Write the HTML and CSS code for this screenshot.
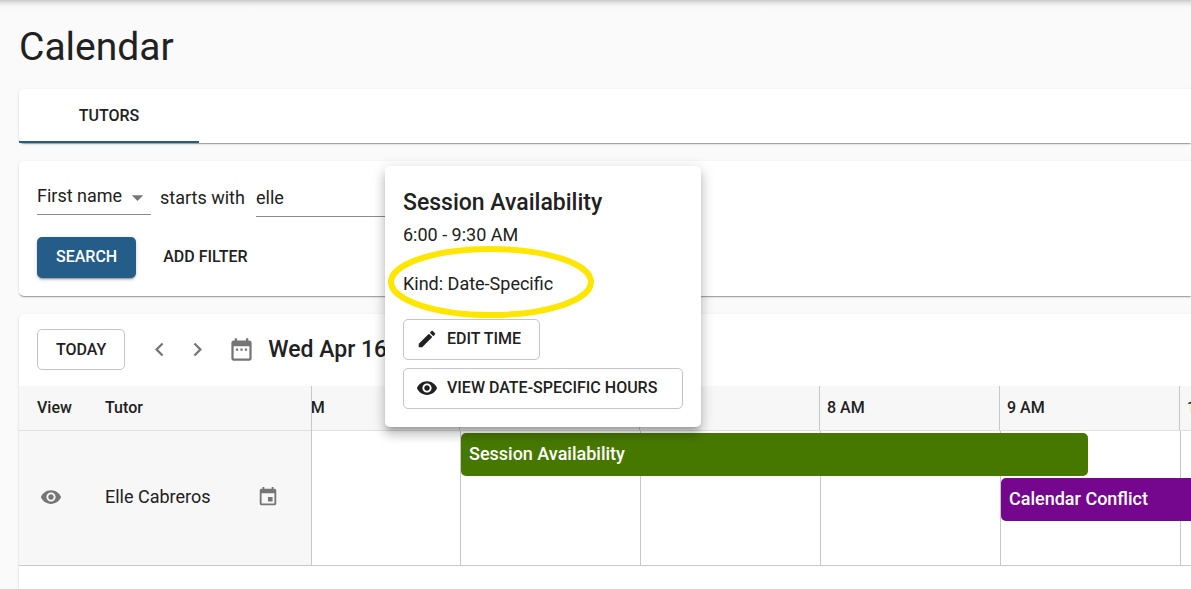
FILE: index.html
```html
<!DOCTYPE html>
<html lang="en">
<head>
    <meta charset="UTF-8">
    <meta name="viewport" content="width=device-width, initial-scale=1.0">
    <title>Calendar</title>
    <link rel="stylesheet" href="styles.css">
</head>
<body>
    <main class="page">
        <h1 class="page-title">Calendar</h1>

        <nav class="card tabs">
            <button class="tab active" type="button">TUTORS</button>
        </nav>

        <form class="card filters">
            <div class="filter-row">
                <div class="select-wrap">
                    <select class="field-select" aria-label="Filter field">
                        <option>First name</option>
                    </select>
                    <svg class="icon arrow" viewBox="0 0 24 24"><path d="M7 10l5 5 5-5z"/></svg>
                </div>
                <label class="filter-label" for="filter-value">starts with</label>
                <input class="filter-input" id="filter-value" type="text" value="elle">
            </div>
            <div class="filter-actions">
                <button class="btn primary" type="button">SEARCH</button>
                <button class="btn text" type="button">ADD FILTER</button>
            </div>
        </form>

        <section class="card schedule">
            <div class="toolbar">
                <button class="btn outlined" type="button">TODAY</button>
                <div class="pager">
                    <button class="icon-btn" type="button" aria-label="Previous day">
                        <svg class="icon large" viewBox="0 0 24 24"><path d="M15.41 7.41L14 6l-6 6 6 6 1.41-1.41L10.83 12z"/></svg>
                    </button>
                    <button class="icon-btn" type="button" aria-label="Next day">
                        <svg class="icon large" viewBox="0 0 24 24"><path d="M10 6L8.59 7.41 13.17 12l-4.58 4.59L10 18l6-6z"/></svg>
                    </button>
                </div>
                <button class="icon-btn" type="button" aria-label="Pick a date">
                    <svg class="icon large" viewBox="0 0 24 24"><path d="M9 11H7v2h2v-2zm4 0h-2v2h2v-2zm4 0h-2v2h2v-2zm2-7h-1V2h-2v2H8V2H6v2H5c-1.11 0-1.99.9-1.99 2L3 20c0 1.1.89 2 2 2h14c1.1 0 2-.9 2-2V6c0-1.1-.9-2-2-2zm0 16H5V9h14v11z"/></svg>
                </button>
                <h2 class="date">Wed Apr 16</h2>
            </div>

            <div class="planner">
                <table class="tutors">
                    <thead>
                        <tr>
                            <th class="col-view">View</th>
                            <th colspan="2">Tutor</th>
                        </tr>
                    </thead>
                    <tbody>
                        <tr>
                            <td class="col-view">
                                <button class="icon-btn" type="button" aria-label="View tutor">
                                    <svg class="icon" viewBox="0 0 24 24"><path d="M12 4.5C7 4.5 2.73 7.61 1 12c1.73 4.39 6 7.5 11 7.5s9.27-3.11 11-7.5c-1.73-4.39-6-7.5-11-7.5zM12 17c-2.76 0-5-2.24-5-5s2.24-5 5-5 5 2.24 5 5-2.24 5-5 5zm0-8c-1.66 0-3 1.34-3 3s1.34 3 3 3 3-1.34 3-3-1.34-3-3-3z"/></svg>
                                </button>
                            </td>
                            <td>Elle Cabreros</td>
                            <td class="col-action">
                                <button class="icon-btn" type="button" aria-label="Tutor calendar">
                                    <svg class="icon" viewBox="0 0 24 24"><path d="M17 12h-5v5h5v-5zM16 1v2H8V1H6v2H5c-1.11 0-1.99.9-1.99 2L3 19c0 1.1.89 2 2 2h14c1.1 0 2-.9 2-2V5c0-1.1-.9-2-2-2h-1V1h-2zm3 18H5V8h14v11z"/></svg>
                                </button>
                            </td>
                        </tr>
                    </tbody>
                </table>

                <div class="timeline">
                    <div class="hours">
                        <div class="hour">5 AM</div>
                        <div class="hour">6 AM</div>
                        <div class="hour">7 AM</div>
                        <div class="hour">8 AM</div>
                        <div class="hour">9 AM</div>
                        <div class="hour">10 AM</div>
                    </div>
                    <div class="lanes">
                        <div class="slot" style="grid-column: 1 / 3"></div>
                        <div class="slot" style="grid-column: 3 / 5"></div>
                        <div class="slot" style="grid-column: 5 / 7"></div>
                        <div class="slot" style="grid-column: 7 / 9"></div>
                        <div class="slot" style="grid-column: 9 / 11"></div>
                        <div class="slot" style="grid-column: 11 / 13"></div>
                        <div class="event availability" style="grid-column: 3 / 10">Session Availability</div>
                        <div class="event conflict" style="grid-column: 9 / 13">Calendar Conflict</div>
                    </div>
                </div>
            </div>
        </section>
    </main>

    <div class="popover" role="dialog" aria-labelledby="popover-title">
        <h2 class="popover-title" id="popover-title">Session Availability</h2>
        <p class="popover-text">6:00 - 9:30 AM</p>
        <p class="popover-text">Kind: Date-Specific</p>
        <svg class="highlight" viewBox="0 0 206 72"><ellipse cx="103" cy="36" rx="100" ry="33"/></svg>
        <button class="btn outlined with-icon" type="button">
            <svg class="icon" viewBox="0 0 24 24"><path d="M3 17.25V21h3.75L17.81 9.94l-3.75-3.75L3 17.25zM20.71 7.04c.39-.39.39-1.02 0-1.41l-2.34-2.34c-.39-.39-1.02-.39-1.41 0l-1.83 1.83 3.75 3.75 1.83-1.83z"/></svg>
            EDIT TIME
        </button>
        <button class="btn outlined with-icon full" type="button">
            <svg class="icon" viewBox="0 0 24 24"><path d="M12 4.5C7 4.5 2.73 7.61 1 12c1.73 4.39 6 7.5 11 7.5s9.27-3.11 11-7.5c-1.73-4.39-6-7.5-11-7.5zM12 17c-2.76 0-5-2.24-5-5s2.24-5 5-5 5 2.24 5 5-2.24 5-5 5zm0-8c-1.66 0-3 1.34-3 3s1.34 3 3 3 3-1.34 3-3-1.34-3-3-3z"/></svg>
            VIEW DATE-SPECIFIC HOURS
        </button>
    </div>
</body>
</html>
```
FILE: styles.css
```css
* {
    box-sizing: border-box;
}

body {
    margin: 0;
    font-family: Roboto, "Liberation Sans", sans-serif;
    font-size: 18px;
    line-height: 27px;
    color: #212121;
    background: #fafafa;
    overflow: hidden;
}

button,
input,
select {
    font-family: inherit;
    color: inherit;
}

.page {
    display: flex;
    flex-direction: column;
    gap: 18px;
    min-height: 100vh;
    padding: 25px 0 0 19px;
    /* shadow cast by the app bar */
    background: linear-gradient(#c8c8c8, #e6e6e6 3px, #f5f5f5 6px, #fafafa 9px);
}

.page-title {
    margin: 0 0 2px;
    font-size: 39px;
    font-weight: 400;
    line-height: 44px;
}

.card {
    background: #fff;
    border-radius: 5px 0 0 5px;
    box-shadow: 0 2px 1px -1px rgba(0, 0, 0, 0.2), 0 1px 1px 0 rgba(0, 0, 0, 0.14), 0 1px 3px 0 rgba(0, 0, 0, 0.12);
}

/* tabs */
.tabs {
    display: flex;
}

.tab {
    width: 180px;
    height: 54px;
    padding: 0;
    border: none;
    background: none;
    font-size: 16px;
    font-weight: 500;
    cursor: pointer;
}

.tab.active {
    border-bottom: 2px solid #235d88;
}

/* buttons and icons */
.btn {
    height: 41px;
    padding: 0 18px 2px;
    border: none;
    border-radius: 5px;
    background: none;
    font-size: 16px;
    font-weight: 500;
    cursor: pointer;
}

.btn.primary {
    padding: 0 19px 2px;
    background: #235d88;
    color: #fff;
    box-shadow: 0 3px 1px -2px rgba(0, 0, 0, 0.2), 0 2px 2px 0 rgba(0, 0, 0, 0.14), 0 1px 5px 0 rgba(0, 0, 0, 0.12);
}

.btn.outlined {
    padding: 0 18px;
    border: 1px solid #c4c4c4;
}

.btn.with-icon {
    display: flex;
    align-items: center;
    gap: 9px;
    padding: 0 18px 2px 12px;
}

.btn.full {
    width: 100%;
}

.icon {
    display: block;
    width: 22px;
    height: 22px;
    fill: currentColor;
}

.icon.large {
    width: 27px;
    height: 27px;
}

.icon-btn {
    display: block;
    padding: 0;
    border: none;
    background: none;
    color: #757575;
    cursor: pointer;
}

/* filters */
.filters {
    display: flex;
    flex-direction: column;
    gap: 20px;
    padding: 18px;
}

.filter-row {
    display: flex;
    gap: 9px;
}

.select-wrap {
    position: relative;
    width: 114px;
    height: 36px;
}

.field-select {
    appearance: none;
    width: 100%;
    height: 36px;
    padding: 0 27px 2px 0;
    border: none;
    border-bottom: 1px solid #8c8c8c;
    border-radius: 0;
    background: none;
    font-size: 18px;
}

.arrow {
    position: absolute;
    top: 5px;
    right: 0;
    width: 27px;
    height: 27px;
    color: #757575;
    pointer-events: none;
}

.filter-label {
    min-width: 87px;
    line-height: 38px;
}

.filter-input {
    width: 200px;
    height: 38px;
    padding: 0;
    border: none;
    border-bottom: 1px solid #8c8c8c;
    background: none;
    font-size: 18px;
}

.filter-actions {
    display: flex;
    gap: 9px;
}

/* schedule */
.schedule {
    flex: 1;
    border-radius: 5px 0 0 0;
}

.toolbar {
    display: flex;
    align-items: center;
    padding: 15px 18px 16px;
}

.pager {
    display: flex;
    gap: 11px;
    margin: 0 17px 0 21px;
}

.date {
    margin: 0 0 0 13px;
    font-size: 23px;
    font-weight: 500;
    line-height: 27px;
}

.planner {
    display: flex;
}

.tutors {
    flex: none;
    width: 293px;
    border-right: 1px solid #c8c8c8;
    border-spacing: 0;
    background: #f7f7f7;
}

.tutors th {
    height: 45px;
    padding: 0 0 2px;
    border-bottom: 1px solid #e0e0e0;
    font-size: 16px;
    font-weight: 500;
    text-align: left;
}

.tutors td {
    height: 135px;
    padding: 0 0 3px;
    border-bottom: 1px solid #c8c8c8;
}

.tutors .col-view {
    width: 86px;
    padding-left: 18px;
}

.col-view .icon-btn {
    padding-left: 3px;
}

.col-action {
    width: 54px;
}

.timeline {
    flex: 1;
    min-width: 0;
    overflow: hidden;
}

/* half hours are 90px wide, the track is scrolled to just past 5 AM */
.hours,
.lanes {
    display: grid;
    grid-template-columns: repeat(12, 90px);
    width: max-content;
    margin-left: -32px;
}

.hours {
    height: 45px;
    border-bottom: 1px solid #e0e0e0;
    background: #f7f7f7;
}

.hour {
    grid-column: span 2;
    padding-left: 7px;
    border-right: 1px solid #c8c8c8;
    font-size: 16px;
    font-weight: 500;
    line-height: 44px;
}

.lanes {
    grid-template-rows: 45px 45px 44px;
    border-bottom: 1px solid #c8c8c8;
}

.slot {
    grid-row: 1 / 4;
    border-left: 1px solid #c8c8c8;
}

.event {
    margin: 2px 2px 0 1px;
    padding: 0 8px;
    border-radius: 5px;
    color: #fff;
    font-weight: 500;
    line-height: 41px;
}

.availability {
    grid-row: 1;
    background: #467800;
}

.conflict {
    grid-row: 2;
    background: #75078f;
}

/* event details */
.popover {
    position: absolute;
    top: 166px;
    left: 385px;
    display: flex;
    flex-direction: column;
    align-items: flex-start;
    width: 316px;
    padding: 18px;
    border-radius: 5px;
    background: #fff;
    box-shadow: 0 5px 5px -3px rgba(0, 0, 0, 0.2), 0 8px 10px 1px rgba(0, 0, 0, 0.14), 0 3px 14px 2px rgba(0, 0, 0, 0.12);
}

.popover-title {
    margin: 0;
    font-size: 23px;
    font-weight: 500;
    line-height: 37px;
}

.popover-text {
    margin: 0 0 22px;
}

.popover .btn + .btn {
    margin-top: 8px;
}

.highlight {
    position: absolute;
    top: 80px;
    left: 3px;
    width: 206px;
    height: 72px;
    fill: none;
    stroke: #ffe600;
    stroke-width: 6;
}
```
